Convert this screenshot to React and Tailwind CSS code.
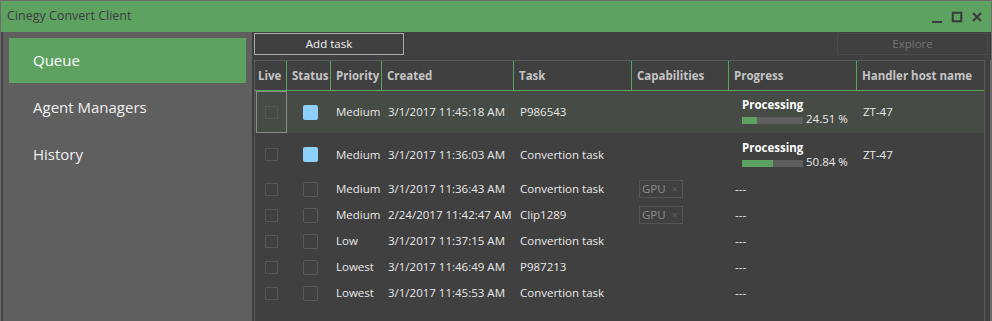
import React from "react";

const COLS = "grid grid-cols-[32px_44px_51px_132px_118px_97px_128px_128px]";

const rows = [
  { live: true, on: true, prio: "Medium", created: "3/1/2017 11:45:18 AM", task: "P986543", pct: 24.51, host: "ZT-47", h: "h-[42px]", sel: true },
  { on: true, prio: "Medium", created: "3/1/2017 11:36:03 AM", task: "Convertion task", pct: 50.84, host: "ZT-47", h: "h-[43px]" },
  { prio: "Medium", created: "3/1/2017 11:36:43 AM", task: "Convertion task", gpu: true, h: "h-[26px]" },
  { prio: "Medium", created: "2/24/2017 11:42:47 AM", task: "Clip1289", gpu: true, h: "h-[26px]" },
  { prio: "Low", created: "3/1/2017 11:37:15 AM", task: "Convertion task", h: "h-[26px]" },
  { prio: "Lowest", created: "3/1/2017 11:46:49 AM", task: "P987213", h: "h-[26px]" },
  { prio: "Lowest", created: "3/1/2017 11:45:53 AM", task: "Convertion task", h: "h-[26px]" },
];

const headers = ["Live", "Status", "Priority", "Created", "Task", "Capabilities", "Progress", "Handler host name"];

function Row({ r }) {
  return (
    <div className={`${COLS} ${r.h} items-center ${r.sel ? "bg-[#464b45]" : ""}`}>
      <div className="h-full flex items-center">
        <div className={`h-full w-[31px] ml-[1px] flex items-center justify-center ${r.live ? "border border-[#8a8a8a]" : ""}`}>
          <div className="w-[13px] h-[13px] border border-[#555]" />
        </div>
      </div>
      <div className="flex justify-center pl-[2px]">
        {r.on ? (
          <div className="w-[15px] h-[15px] rounded-[2px] bg-[#8dcffd]" />
        ) : (
          <div className="w-[15px] h-[15px] rounded-[2px] border border-[#5a5a5a]" />
        )}
      </div>
      <div className="pl-[5px] whitespace-nowrap">{r.prio}</div>
      <div className="pl-[6px] whitespace-nowrap">{r.created}</div>
      <div className="pl-[6px] whitespace-nowrap">{r.task}</div>
      <div className="pl-[7px]">
        {r.gpu && (
          <span className="inline-flex items-center gap-[6px] h-[18px] px-[2px] pr-[5px] border border-[#555] text-[#8d8d8d]">
            GPU <span className="text-[10px] text-[#5e5e5e]">×</span>
          </span>
        )}
      </div>
      <div className="pl-[6px]">
        {r.pct != null ? (
          <div className="pl-[7px] leading-[14px]">
            <div className="font-bold text-white">Processing</div>
            <div className="flex items-end gap-[3px]">
              <div className="w-[61px] h-[7px] bg-[#5f5f5f] mb-[2px]">
                <div className="h-full bg-[#5ea262]" style={{ width: `${r.pct}%` }} />
              </div>
              <span>{r.pct.toFixed(2)} %</span>
            </div>
          </div>
        ) : (
          <span>---</span>
        )}
      </div>
      <div className="pl-[6px]">{r.host ?? ""}</div>
    </div>
  );
}

export default function App() {
  return (
    <div
      className="w-[992px] h-[321px] flex flex-col bg-[#6b6b6b] text-[11.5px] text-[#e8e8e8] overflow-hidden"
      style={{ fontFamily: '"Segoe UI", "Open Sans", sans-serif' }}
    >
      {/* title bar */}
      <div className="h-[31px] shrink-0 mx-[1px] mt-[1px] bg-[#5ea262] flex items-center justify-between pl-[6px] pr-[8px]">
        <span className="text-[12.5px] text-[#3d3d3d]">Cinegy Convert Client</span>
        <div className="flex items-center gap-[8px] text-[#3a3a3a]">
          <svg width="12" height="12" viewBox="0 0 12 12"><rect x="1" y="10" width="10" height="2" fill="currentColor" /></svg>
          <svg width="12" height="12" viewBox="0 0 12 12"><rect x="1.75" y="1.75" width="8.5" height="8.5" fill="none" stroke="currentColor" strokeWidth="2" /></svg>
          <svg width="12" height="12" viewBox="0 0 12 12"><path d="M2 2L10 10M10 2L2 10" stroke="currentColor" strokeWidth="2" /></svg>
        </div>
      </div>

      <div className="flex-1 flex ml-[1px] mr-[1px] border-l-2 border-[#454545] min-h-0">
        {/* sidebar */}
        <div className="w-[251px] shrink-0 bg-[#5f5f5f] pt-[6px] px-[6px] border-r-2 border-[#3c3c3c]">
          <div className="h-[45px] bg-[#5ea262] flex items-center pl-[24px] text-[15px] text-white">Queue</div>
          <div className="h-[48px] flex items-center pl-[24px] text-[15px] text-[#f0f0f0]">Agent Managers</div>
          <div className="h-[48px] flex items-center pl-[24px] text-[15px] text-[#f0f0f0] -mt-[1px]">History</div>
        </div>

        {/* main */}
        <div className="flex-1 bg-[#404040] flex flex-col min-w-0">
          <div className="h-[28px] flex items-start pt-[1px] justify-between pr-[3px]">
            <button className="w-[150px] h-[22px] border border-[#a9a9a9] text-[#f0f0f0] leading-none">Add task</button>
            <button className="w-[151px] h-[22px] border border-[#4b4b4b] text-[#747474] leading-none">Explore</button>
          </div>
          <div className="flex-1 flex min-h-0">
            <div className="w-[731px] border-l border-t border-r border-[#5a5a5a] flex flex-col">
              <div className={`${COLS} h-[30px] items-center border-b border-[#5ea262] font-bold text-[#c4c4c4]`}>
                {headers.map((h, i) => (
                  <div
                    key={h}
                    className={`h-full flex items-center whitespace-nowrap ${i === 0 ? "pl-[3px]" : "pl-[5px]"} ${i < headers.length - 1 ? "border-r border-[#5ea262]" : ""}`}
                  >
                    {h}
                  </div>
                ))}
              </div>
              {rows.map((r, i) => (
                <Row key={i} r={r} />
              ))}
            </div>
            <div className="flex-1 border-r border-[#6a6a6a]" />
          </div>
        </div>
      </div>
    </div>
  );
}
